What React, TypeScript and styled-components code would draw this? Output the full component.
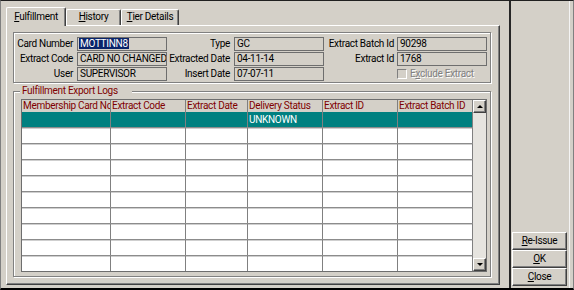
import React from "react";
import styled, { createGlobalStyle } from "styled-components";

const GlobalStyle = createGlobalStyle`
  html, body {
    margin: 0;
    padding: 0;
    background: #d4d0c8;
  }
  body {
    font-family: Roboto, "Liberation Sans", Arial, sans-serif;
    font-size: 10px;
    letter-spacing: -0.3px;
    color: #000;
  }
  * {
    box-sizing: border-box;
  }
`;

type FieldType = { label: string; value: string; selected?: boolean };

const columns: Array<{ pad: number; fields: FieldType[] }> = [
  {
    pad: 4,
    fields: [
      { label: "Card Number", value: "MOTTINN8", selected: true },
      { label: "Extract Code", value: "CARD NO CHANGED" },
      { label: "User", value: "SUPERVISOR" },
    ],
  },
  {
    pad: 4,
    fields: [
      { label: "Type", value: "GC" },
      { label: "Extracted Date", value: "04-11-14" },
      { label: "Insert Date", value: "07-07-11" },
    ],
  },
  {
    pad: 3,
    fields: [
      { label: "Extract Batch Id", value: "90298" },
      { label: "Extract Id", value: "1768" },
    ],
  },
];

const headers = [
  "Membership Card No",
  "Extract Code",
  "Extract Date",
  "Delivery Status",
  "Extract ID",
  "Extract Batch ID",
];

const rows: string[][] = [
  ["", "", "", "UNKNOWN", "", ""],
  ...Array.from({ length: 9 }, () => ["", "", "", "", "", ""]),
];

const tabs = [
  { key: "F", rest: "ulfillment", width: 60, active: true },
  { key: "H", rest: "istory", width: 55, active: false },
  { key: "T", rest: "ier Details", width: 58, active: false },
];

const App = () => {
  return (
    <>
      <GlobalStyle />
      <Window>
        <LeftPane>
          <TabStrip>
            {tabs.map((tab) => (
              <Tab key={tab.key} $width={tab.width} $active={tab.active}>
                <u>{tab.key}</u>
                {tab.rest}
              </Tab>
            ))}
          </TabStrip>
          <TabPanel>
            <InfoGroup>
              {[0, 1, 2].map((row) =>
                columns.map((col, ci) => {
                  const field = col.fields[row];
                  if (!field) {
                    return (
                      <React.Fragment key={`${row}-${ci}`}>
                        <span />
                        <CheckRow>
                          <CheckBox />
                          <span>
                            E<u>x</u>clude Extract
                          </span>
                        </CheckRow>
                      </React.Fragment>
                    );
                  }
                  return (
                    <React.Fragment key={`${row}-${ci}`}>
                      <Label $pad={col.pad}>{field.label}</Label>
                      <Field>
                        {field.selected ? (
                          <Selection>{field.value}</Selection>
                        ) : (
                          field.value
                        )}
                      </Field>
                    </React.Fragment>
                  );
                })
              )}
            </InfoGroup>
            <LogsGroup>
              <Caption>Fulfillment Export Logs</Caption>
              <TableFrame>
                <Grid>
                  <HeaderRow>
                    {headers.map((h) => (
                      <HeaderCell key={h}>{h}</HeaderCell>
                    ))}
                  </HeaderRow>
                  {rows.map((row, ri) => (
                    <Row
                      key={ri}
                      $selected={ri === 0}
                      $first={ri === 0}
                      $last={ri === rows.length - 1}
                    >
                      {row.map((cell, ci) => (
                        <Cell key={ci}>{cell}</Cell>
                      ))}
                    </Row>
                  ))}
                </Grid>
                <ScrollBar>
                  <ScrollButton>
                    <Arrow $up />
                  </ScrollButton>
                  <ScrollTrack />
                  <ScrollButton>
                    <Arrow />
                  </ScrollButton>
                </ScrollBar>
              </TableFrame>
            </LogsGroup>
          </TabPanel>
        </LeftPane>
        <Divider />
        <RightPane>
          <ActionButton>
            <u>R</u>e-Issue
          </ActionButton>
          <ActionButton>
            <u>O</u>K
          </ActionButton>
          <ActionButton>
            <u>C</u>lose
          </ActionButton>
        </RightPane>
      </Window>
    </>
  );
};

export default App;

const Window = styled.div`
  width: 574px;
  height: 290px;
  display: flex;
  background: #d4d0c8;
  border-top: 1px solid #202020;
  border-left: 1px solid #808080;
  border-right: 1px solid #808080;
  border-bottom: 2px solid #000;
`;

const LeftPane = styled.div`
  width: 508px;
  display: flex;
  flex-direction: column;
  padding: 6px 9px 3px 5px;
`;

const TabStrip = styled.div`
  height: 18px;
  display: flex;
  align-items: flex-end;
`;

const Tab = styled.div<{ $width: number; $active: boolean }>`
  width: ${(p) => p.$width}px;
  height: ${(p) => (p.$active ? 19 : 16)}px;
  margin-bottom: ${(p) => (p.$active ? -1 : 0)}px;
  position: relative;
  z-index: ${(p) => (p.$active ? 1 : 0)};
  background: #d4d0c8;
  border-top: 1px solid #fff;
  border-left: 1px solid #fff;
  border-right: 1px solid #404040;
  border-radius: 2px 2px 0 0;
  box-shadow: inset -1px 0 #808080;
  text-align: center;
  line-height: ${(p) => (p.$active ? 17 : 14)}px;
  white-space: nowrap;
`;

const TabPanel = styled.div`
  width: 494px;
  height: 260px;
  border-top: 1px solid #fff;
  border-left: 1px solid #fff;
  border-right: 1px solid #404040;
  border-bottom: 1px solid #404040;
  box-shadow: inset -1px -1px #808080;
  padding: 6px 8px 7px 6px;
`;

const Etched = styled.div`
  border: 1px solid #808080;
  box-shadow: inset 1px 1px #fff, 1px 1px #fff;
`;

const InfoGroup = styled(Etched)`
  height: 51px;
  display: grid;
  grid-template-columns: 63px 90px 67px 90px 73px 90px;
  grid-auto-rows: 14px;
  row-gap: 1px;
  padding: 4px 3px 1px 0;
`;

const Label = styled.span<{ $pad: number }>`
  text-align: right;
  padding-right: ${(p) => p.$pad}px;
  line-height: 14px;
  white-space: nowrap;
`;

const Field = styled.div`
  height: 14px;
  border: 1px solid #6e6e6e;
  padding: 0 1px 0 2px;
  line-height: 12px;
  white-space: nowrap;
  overflow: hidden;
`;

const Selection = styled.span`
  background: #0a246a;
  color: #fff;
  padding: 0 1px;
  margin-left: -1px;
`;

const CheckRow = styled.div`
  display: flex;
  align-items: center;
  gap: 3px;
  color: #808080;
  text-shadow: 1px 1px #fff;
  line-height: 14px;
  white-space: nowrap;
`;

const CheckBox = styled.span`
  width: 10px;
  height: 10px;
  border-top: 1px solid #808080;
  border-left: 1px solid #808080;
  border-right: 1px solid #fff;
  border-bottom: 1px solid #fff;
  background: #d4d0c8;
`;

const LogsGroup = styled(Etched)`
  position: relative;
  height: 186px;
  margin-top: 8px;
  padding: 7px 3px 4px 7px;
`;

const Caption = styled.span`
  position: absolute;
  top: -8px;
  left: 6px;
  padding: 0 14px 0 2px;
  background: #d4d0c8;
  color: #800000;
  line-height: 13px;
`;

const TableFrame = styled.div`
  width: 466px;
  height: 173px;
  display: flex;
  border: 1px solid #6e6e6e;
  background: #fff;
`;

const Grid = styled.div`
  width: 451px;
  display: flex;
  flex-direction: column;
`;

const cols = "89px 75px 62px 75px 75px 75px";

const HeaderRow = styled.div`
  height: 12px;
  display: grid;
  grid-template-columns: ${cols};
  background: #d4d0c8;
`;

const HeaderCell = styled.div`
  border-right: 1px solid #808080;
  color: #800000;
  padding-left: 1px;
  line-height: 12px;
  white-space: nowrap;
  overflow: hidden;
`;

const Row = styled.div<{ $selected: boolean; $first: boolean; $last: boolean }>`
  height: ${(p) => (p.$last ? 15 : 16)}px;
  display: grid;
  grid-template-columns: ${cols};
  background: ${(p) => (p.$selected ? "#008080" : "#fff")};
  color: ${(p) => (p.$selected ? "#fff" : "#000")};
  border-bottom: ${(p) => (p.$last ? "none" : "1px solid #8c8c8c")};
  box-shadow: ${(p) => (p.$first ? "none" : "inset 0 1px #cfcfcf")};
`;

const Cell = styled.div`
  border-right: 1px solid #808080;
  padding-left: 1px;
  line-height: 15px;
  white-space: nowrap;
  overflow: hidden;
`;

const ScrollBar = styled.div`
  width: 13px;
  display: flex;
  flex-direction: column;
  background: #d4d0c8;
`;

const ScrollButton = styled.div`
  height: 13px;
  display: flex;
  align-items: center;
  justify-content: center;
  background: #d4d0c8;
  border-top: 1px solid #fff;
  border-left: 1px solid #fff;
  border-right: 1px solid #404040;
  border-bottom: 1px solid #404040;
  box-shadow: inset -1px -1px #808080;
`;

const Arrow = styled.span<{ $up?: boolean }>`
  width: 0;
  height: 0;
  border-left: 3px solid transparent;
  border-right: 3px solid transparent;
  ${(p) =>
    p.$up ? "border-bottom: 3px solid #000;" : "border-top: 3px solid #000;"}
`;

const ScrollTrack = styled.div`
  flex: 1;
  background: #e6e4df;
`;

const Divider = styled.div`
  width: 2px;
  background: #262626;
`;

const RightPane = styled.div`
  width: 59px;
  margin-right: 3px;
  display: flex;
  flex-direction: column;
  justify-content: flex-end;
  padding: 0 0 2px 1px;
  border-right: 1px solid #f4f4f4;
`;

const ActionButton = styled.div`
  width: 55px;
  height: 18px;
  background: #d4d0c8;
  border-top: 1px solid #fff;
  border-left: 1px solid #fff;
  border-right: 1px solid #404040;
  border-bottom: 1px solid #404040;
  box-shadow: inset -1px -1px #808080;
  text-align: center;
  line-height: 15px;
`;
